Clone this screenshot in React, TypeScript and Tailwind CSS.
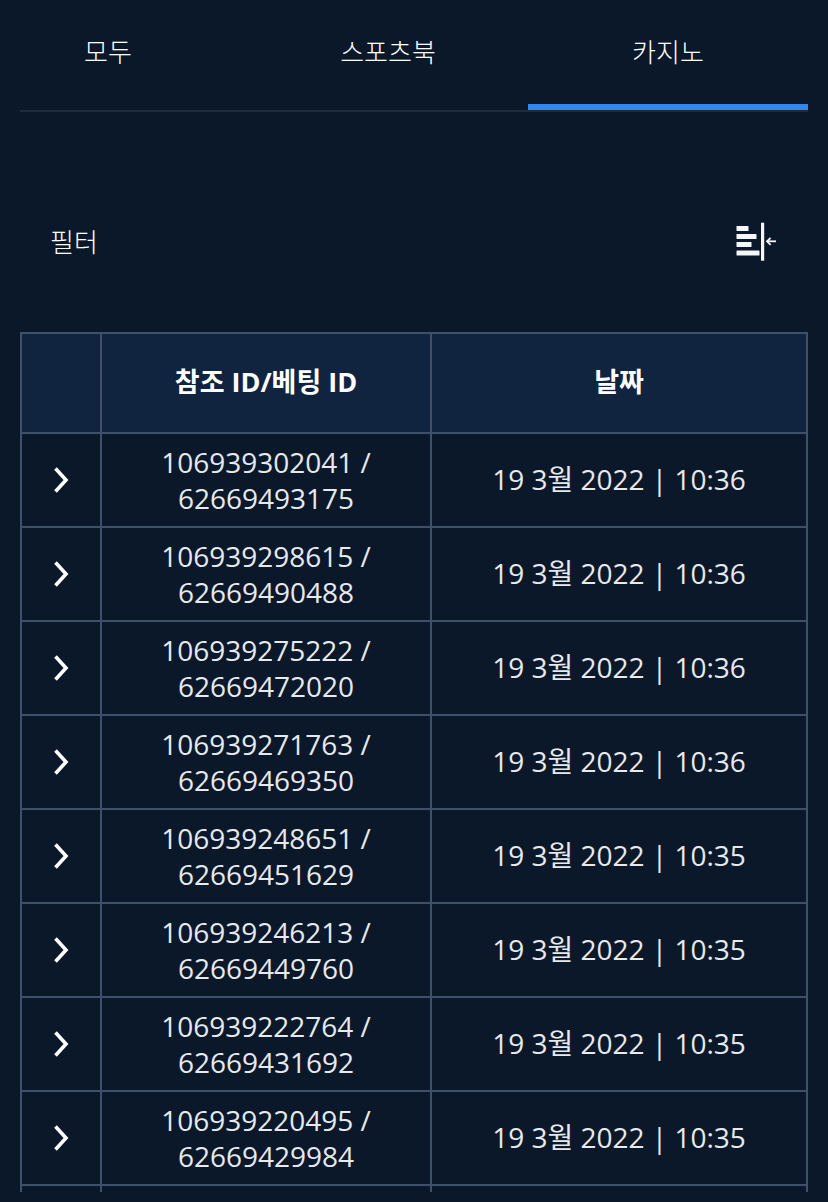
const rows = [
  ["106939302041", "62669493175", "10:36"],
  ["106939298615", "62669490488", "10:36"],
  ["106939275222", "62669472020", "10:36"],
  ["106939271763", "62669469350", "10:36"],
  ["106939248651", "62669451629", "10:35"],
  ["106939246213", "62669449760", "10:35"],
  ["106939222764", "62669431692", "10:35"],
  ["106939220495", "62669429984", "10:35"],
];

function Chevron() {
  return (
    <svg width="20" height="28" viewBox="0 0 20 28" fill="none" aria-hidden="true">
      <path d="M4.5 2.5 L15 14 L4.5 25.5" stroke="#ffffff" strokeWidth="3.6" />
    </svg>
  );
}

function CollapseIcon() {
  return (
    <svg width="44" height="40" viewBox="0 0 44 40" fill="none" aria-hidden="true">
      <rect x="0.5" y="4" width="12" height="5" rx="0.6" fill="#f5f6f7" />
      <rect x="0.5" y="12" width="20" height="5" rx="0.6" fill="#f5f6f7" />
      <rect x="0.5" y="20" width="15" height="5" rx="0.6" fill="#f5f6f7" />
      <rect x="0.5" y="28.5" width="23" height="5" rx="0.6" fill="#f5f6f7" />
      <rect x="25" y="0.7" width="3.2" height="38" fill="#f5f6f7" />
      <path d="M31 19.3 L40 19.3" stroke="#f5f6f7" strokeWidth="1.8" />
      <path d="M34.6 15.8 L31 19.3 L34.6 22.8" stroke="#f5f6f7" strokeWidth="1.8" />
    </svg>
  );
}

export default function App() {
  return (
    <div className="w-[828px] h-[1202px] overflow-hidden bg-[#0a1829] text-white font-['Open_Sans','Noto_Sans_CJK_KR',sans-serif]">
      <div className="mx-5 flex h-[112px] border-b-2 border-[#1f2b3a] text-[26px] font-light">
        <div className="w-[176px] pt-[32px] text-center leading-[40px]">모두</div>
        <div className="ml-[52px] w-[280px] pt-[32px] text-center leading-[40px]">스포츠북</div>
        <div className="-mb-0.5 h-[110px] w-[280px] border-b-[6px] border-[#3584f0] pt-[32px] text-center leading-[40px]">카지노</div>
      </div>

      <div className="flex h-[220px] items-start justify-between pl-[50px] pr-[48px] pt-[110px]">
        <div className="text-[26px] font-light leading-[40px]">필터</div>
        <CollapseIcon />
      </div>

      <div className="mx-5 h-[860px] overflow-hidden border-l-2 border-t-2 border-[#3f5068]">
        <div className="flex h-[100px] bg-[#10243f] text-[27px] font-bold">
          <div className="w-[80px] border-b-2 border-r-2 border-[#3f5068]" />
          <div className="flex w-[330px] items-center justify-center border-b-2 border-r-2 border-[#3f5068] pb-[2px]">참조 ID/베팅 ID</div>
          <div className="flex w-[376px] items-center justify-center border-b-2 border-r-2 border-[#3f5068] pb-[2px]">날짜</div>
        </div>
        {rows.map(([ref, bet, time]) => (
          <div key={ref} className="flex h-[94px] text-[28px] leading-[36px] text-[#e6e9ed]">
            <div className="flex w-[80px] items-center justify-center border-b-2 border-r-2 border-[#3f5068]">
              <Chevron />
            </div>
            <div className="flex w-[330px] items-center justify-center border-b-2 border-r-2 border-[#3f5068] text-center">
              <div>
                {ref} /<br />
                {bet}
              </div>
            </div>
            <div className="flex w-[376px] items-center justify-center border-b-2 border-r-2 border-[#3f5068] pb-[2px]">
              19 3월 2022 | {time}
            </div>
          </div>
        ))}
        <div className="flex h-[94px]">
          <div className="w-[80px] border-r-2 border-[#3f5068]" />
          <div className="w-[330px] border-r-2 border-[#3f5068]" />
          <div className="w-[376px] border-r-2 border-[#3f5068]" />
        </div>
      </div>
    </div>
  );
}
